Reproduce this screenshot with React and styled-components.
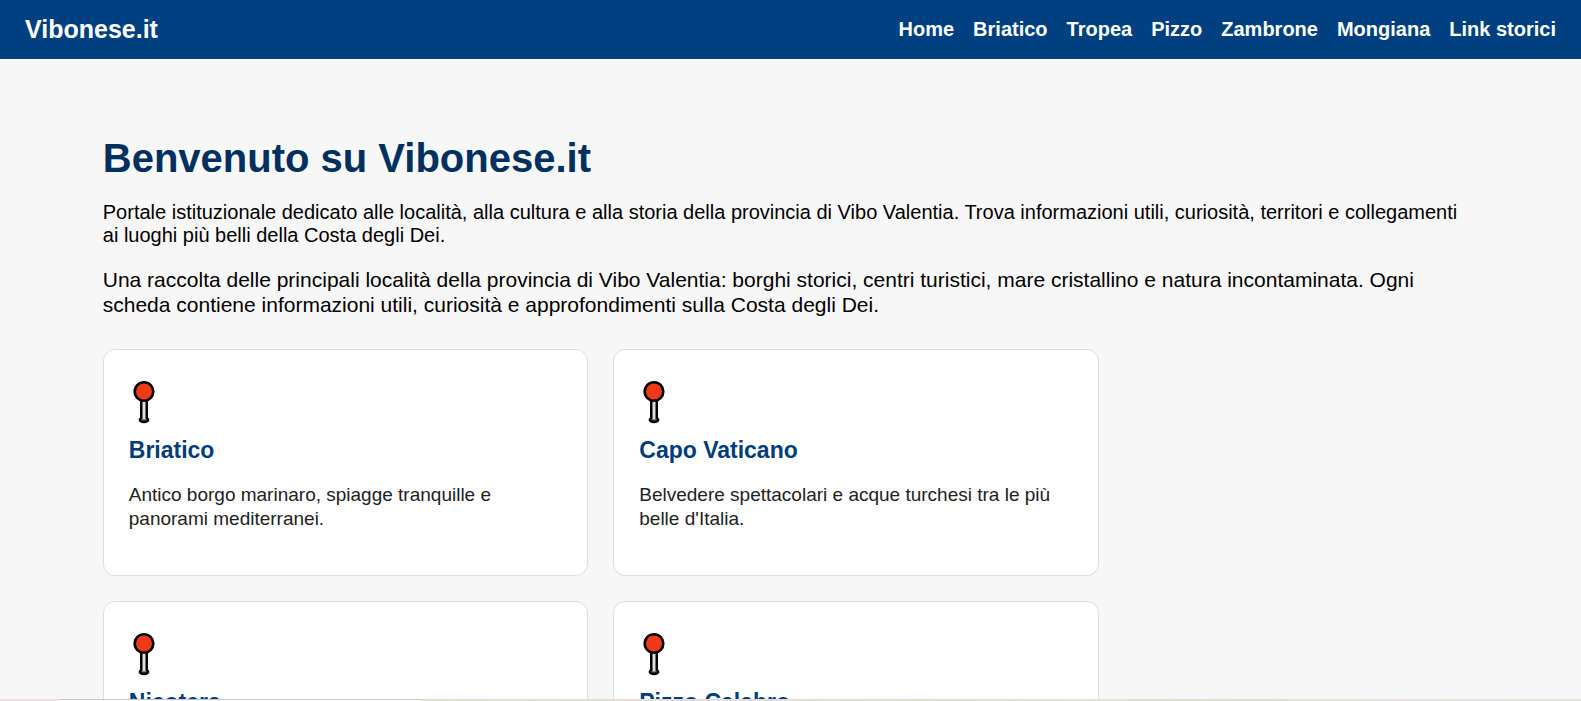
import React from 'react'
import styled, { createGlobalStyle } from 'styled-components'

const GlobalStyle = createGlobalStyle`
  *,
  *::before,
  *::after {
    box-sizing: border-box;
  }

  body {
    margin: 0;
    background: #f7f7f7;
    color: #000;
    font-family: 'Liberation Sans', Arial, sans-serif;
  }
`

const Page = styled.div`
  display: flex;
  flex-direction: column;
  height: 100vh;
  overflow: hidden;
`

const Header = styled.header`
  display: flex;
  flex-shrink: 0;
  justify-content: space-between;
  align-items: center;
  padding: 15px 25px;
  background: #004080;
  color: #fff;
`

const Logo = styled.div`
  font-size: 25px;
  font-weight: bold;
  line-height: 29px;
`

const Nav = styled.nav`
  display: flex;
  gap: 19px;
`

const NavLink = styled.a`
  color: #fff;
  font-size: 20px;
  font-weight: bold;
  line-height: 29px;
  text-decoration: none;

  &:hover,
  &:focus {
    text-decoration: underline;
  }
`

const Main = styled.main`
  flex: 1;
  min-height: 0;
  width: 87%;
  margin: 0 auto;
  padding-top: 76px;
  overflow: hidden;
`

const Title = styled.h1`
  margin: 0 0 20px;
  color: #003060;
  font-size: 40px;
  line-height: 46px;
`

const Intro = styled.p`
  margin: 0 0 20px;
  font-size: 20px;
  line-height: 23px;
`

const Lead = styled.p`
  margin: 0 0 32px;
  font-size: 21px;
  line-height: 25px;
`

const Grid = styled.div`
  display: grid;
  grid-template-columns: repeat(2, 1fr);
  gap: 25px;
  max-width: 996px;
`

const Card = styled.a`
  display: block;
  min-height: 227px;
  padding: 25px;
  border: 1px solid #ddd;
  border-radius: 12px;
  background: #fff;
  color: #222;
  text-decoration: none;
`

const PinIcon = styled.svg`
  display: block;
  width: 30px;
  height: 54px;
`

const CardTitle = styled.h3`
  margin: 8px 0 20px;
  color: #003d7a;
  font-size: 23px;
  line-height: 26px;
`

const CardText = styled.p`
  margin: 0;
  font-size: 19px;
  line-height: 24px;
`

const BottomEdge = styled.footer`
  display: flex;
  flex-shrink: 0;
  height: 2px;
  background: linear-gradient(90deg, #d9e2cc 27%, #e8dcda 45%, #d8e0cc 58%, #e0e2dc 68%, #dce2cf 75%, #e4dfdc 88%, #e0e2dc);
`

const EdgeStart = styled.div`
  width: 60px;
  background: #ecdede;
`

const EdgeTab = styled.div`
  width: 360px;
  border-top: 1px solid #c8c8c8;
  background: #fff;
`

const links = ['Home', 'Briatico', 'Tropea', 'Pizzo', 'Zambrone', 'Mongiana', 'Link storici']

const places = [
  {
    name: 'Briatico',
    text: 'Antico borgo marinaro, spiagge tranquille e panorami mediterranei.',
  },
  {
    name: 'Capo Vaticano',
    text: "Belvedere spettacolari e acque turchesi tra le più belle d'Italia.",
  },
  { name: 'Nicotera' },
  { name: 'Pizzo Calabro' },
]

const Pin = () => (
  <PinIcon viewBox="0 0 30 54" aria-hidden="true">
    <path d="M11 24h8v18.500q1.400 1 1.400 2.500c0 2-2.400 3.200-5.400 3.200s-5.400-1.200-5.400-3.200q0-1.500 1.400-2.500z" fill="#000" />
    <path d="M13.500 24h3v20.500h-3z" fill="#ddd" />
    <path d="M12.500 44.500q2.500 1 5 0" fill="none" stroke="#888" strokeWidth="1" />
    <circle cx="15" cy="16.500" r="9.300" fill="#f03a17" stroke="#000" strokeWidth="2.600" />
  </PinIcon>
)

const App = () => (
  <>
    <GlobalStyle />
    <Page>
      <Header>
        <Logo>Vibonese.it</Logo>
        <Nav>
          {links.map(label => (
            <NavLink key={label} href="#">
              {label}
            </NavLink>
          ))}
        </Nav>
      </Header>
      <Main>
        <Title>Benvenuto su Vibonese.it</Title>
        <Intro>
          Portale istituzionale dedicato alle località, alla cultura e alla storia della provincia di
          Vibo Valentia. Trova informazioni utili, curiosità, territori e collegamenti ai luoghi più
          belli della Costa degli Dei.
        </Intro>
        <Lead>
          Una raccolta delle principali località della provincia di Vibo Valentia: borghi storici,
          centri turistici, mare cristallino e natura incontaminata. Ogni scheda contiene
          informazioni utili, curiosità e approfondimenti sulla Costa degli Dei.
        </Lead>
        <Grid>
          {places.map(place => (
            <Card key={place.name} href="#">
              <Pin />
              <CardTitle>{place.name}</CardTitle>
              {place.text && <CardText>{place.text}</CardText>}
            </Card>
          ))}
        </Grid>
      </Main>
      <BottomEdge>
        <EdgeStart />
        <EdgeTab />
      </BottomEdge>
    </Page>
  </>
)

export default App
